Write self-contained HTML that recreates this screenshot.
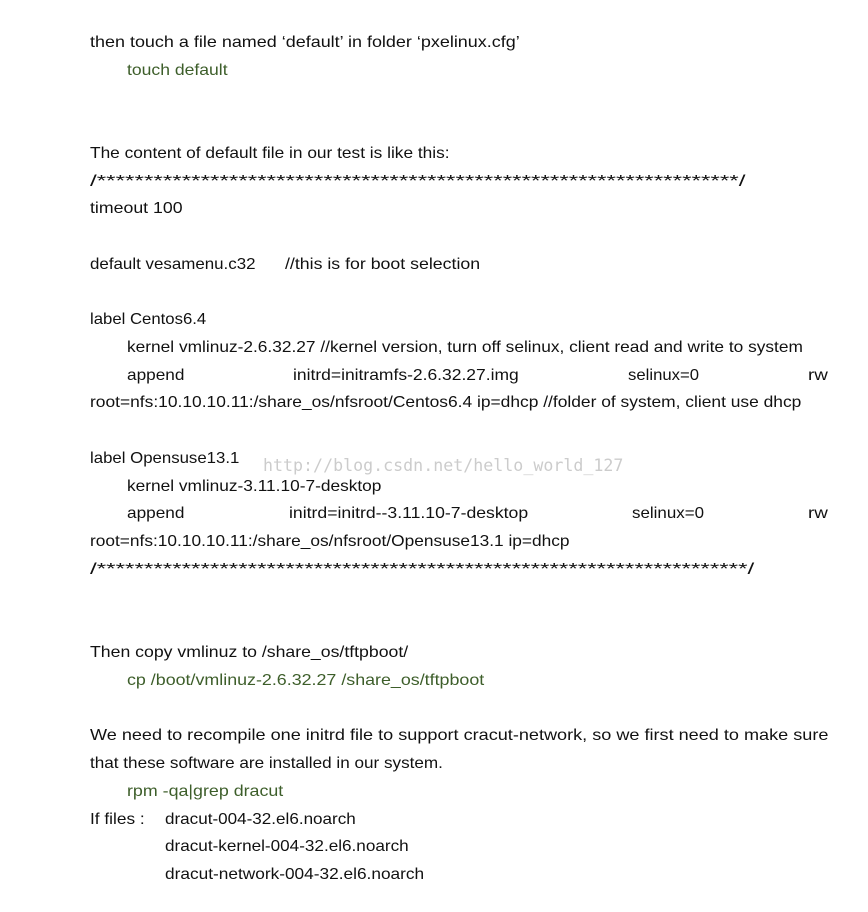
<!DOCTYPE html>
<html><head><meta charset="utf-8">
<style>
html,body{margin:0;padding:0;background:#fff;}
body{width:868px;height:912px;position:relative;overflow:hidden;font-family:"Liberation Sans",sans-serif;font-size:16px;color:#111;}
span.l{position:absolute;white-space:nowrap;line-height:24px;transform-origin:0 50%;}
.g{color:#3d5e2a;}
.wm{position:absolute;left:263px;top:454px;font-family:"DejaVu Sans Mono","Liberation Mono",monospace;font-size:17px;color:#cccccc;white-space:nowrap;line-height:24px;transform-origin:0 50%;}
</style></head><body>
<div class="wm" id="wm">http://blog.csdn.net/hello_world_127</div>
<span class="l" w="430" style="left:90px;top:31px">then touch a file named ‘default’ in folder ‘pxelinux.cfg’</span>
<span class="l g" w="101" style="left:127px;top:59px">touch default</span>
<span class="l" w="360" style="left:90px;top:142px">The content of default file in our test is like this:</span>
<span class="l" w="655" style="left:90px;top:170px">/********************************************************************/</span>
<span class="l" w="93" style="left:90px;top:197px">timeout 100</span>
<span class="l" w="166" style="left:90px;top:253px">default vesamenu.c32</span>
<span class="l" w="195" style="left:285px;top:253px">//this is for boot selection</span>
<span class="l" w="116" style="left:90px;top:308px">label Centos6.4</span>
<span class="l" w="676" style="left:127px;top:336px">kernel vmlinuz-2.6.32.27 //kernel version, turn off selinux, client read and write to system</span>
<span class="l" w="57" style="left:127px;top:364px">append</span>
<span class="l" w="226" style="left:293px;top:364px">initrd=initramfs-2.6.32.27.img</span>
<span class="l" w="71" style="left:628px;top:364px">selinux=0</span>
<span class="l" w="20" style="left:808px;top:364px">rw</span>
<span class="l" w="711" style="left:90px;top:391px">root=nfs:10.10.10.11:/share_os/nfsroot/Centos6.4 ip=dhcp //folder of system, client use dhcp</span>
<span class="l" w="149" style="left:90px;top:447px">label Opensuse13.1</span>
<span class="l" w="254" style="left:127px;top:475px">kernel vmlinuz-3.11.10-7-desktop</span>
<span class="l" w="57" style="left:127px;top:502px">append</span>
<span class="l" w="239" style="left:289px;top:502px">initrd=initrd--3.11.10-7-desktop</span>
<span class="l" w="72" style="left:632px;top:502px">selinux=0</span>
<span class="l" w="20" style="left:808px;top:502px">rw</span>
<span class="l" w="480" style="left:90px;top:530px">root=nfs:10.10.10.11:/share_os/nfsroot/Opensuse13.1 ip=dhcp</span>
<span class="l" w="665" style="left:90px;top:558px">/*********************************************************************/</span>
<span class="l" w="318" style="left:90px;top:641px">Then copy vmlinuz to /share_os/tftpboot/</span>
<span class="l g" w="357" style="left:127px;top:669px">cp /boot/vmlinuz-2.6.32.27 /share_os/tftpboot</span>
<span class="l" w="738" style="left:90px;top:724px">We need to recompile one initrd file to support cracut-network, so we first need to make sure</span>
<span class="l" w="353" style="left:90px;top:752px">that these software are installed in our system.</span>
<span class="l g" w="156" style="left:127px;top:780px">rpm -qa|grep dracut</span>
<span class="l" w="55" style="left:90px;top:808px">If files :</span>
<span class="l" w="191" style="left:165px;top:808px">dracut-004-32.el6.noarch</span>
<span class="l" w="244" style="left:165px;top:835px">dracut-kernel-004-32.el6.noarch</span>
<span class="l" w="259" style="left:165px;top:863px">dracut-network-004-32.el6.noarch</span>
<script>
document.querySelectorAll('span.l').forEach(function(s){
  var w=parseFloat(s.getAttribute('w'));var a=s.offsetWidth;
  if(a>0)s.style.transform='scaleX('+(w/a)+')';
});
var m=document.getElementById('wm');var mw=m.offsetWidth;if(mw>0)m.style.transform='scaleX('+(360/mw)+')';
</script>
</body></html>
